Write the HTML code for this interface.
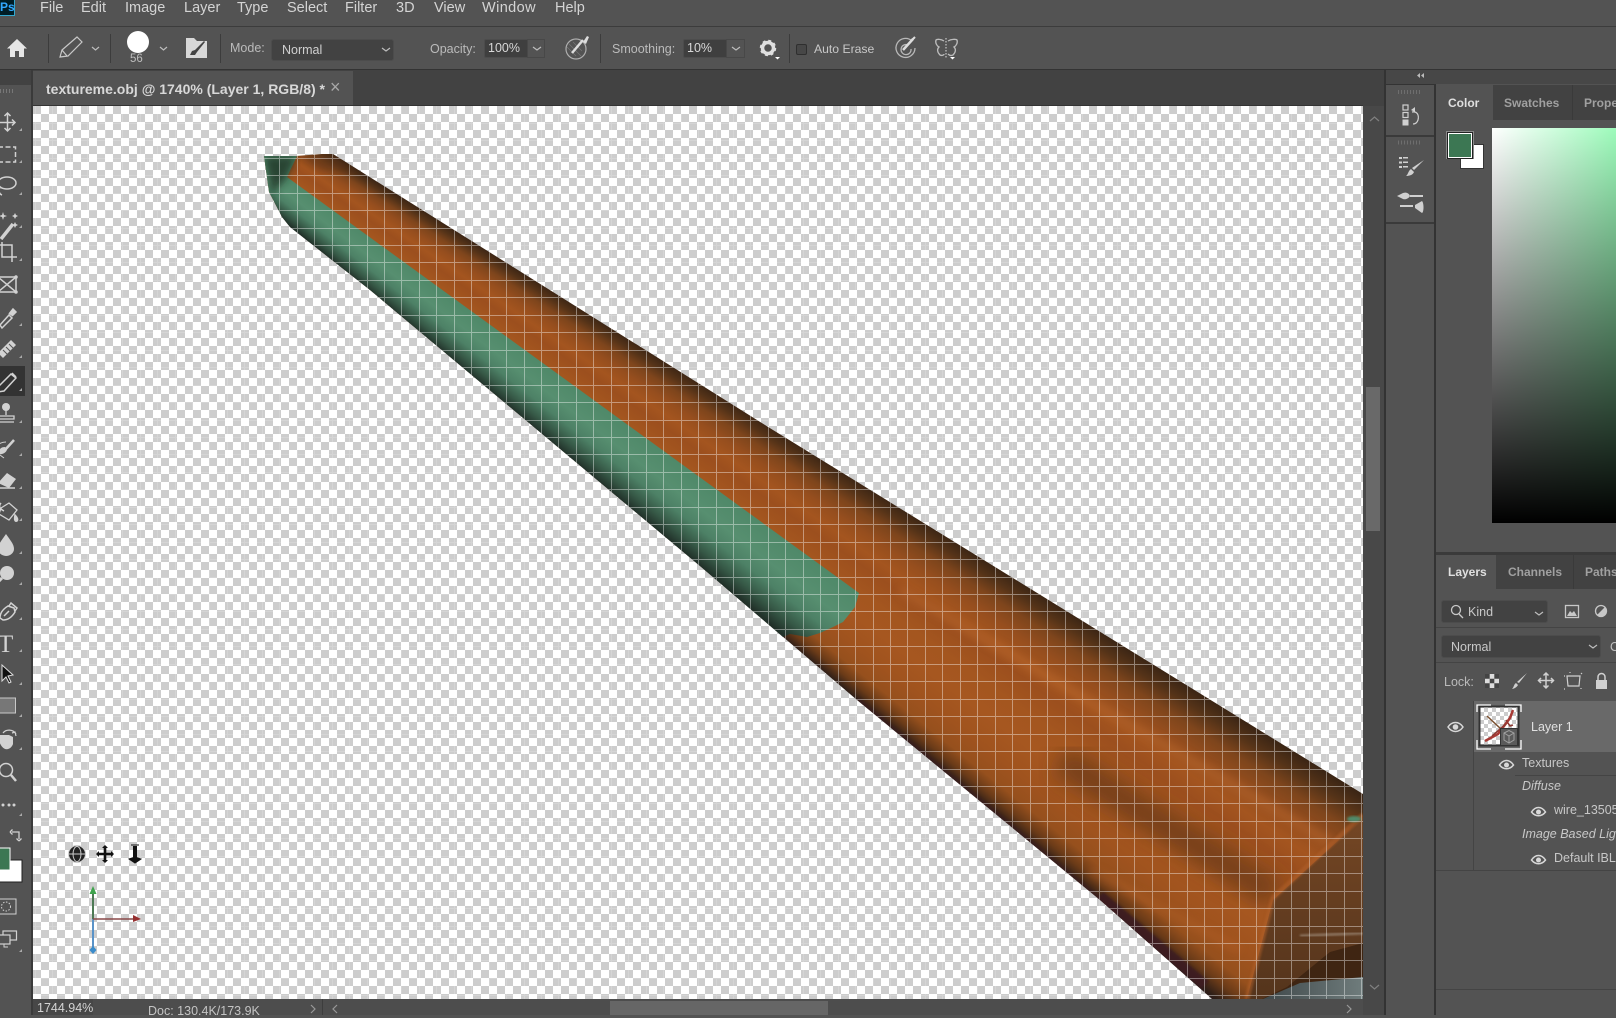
<!DOCTYPE html>
<html>
<head>
<meta charset="utf-8">
<style>
html,body{margin:0;padding:0;background:#535353;width:1616px;height:1015px;overflow:hidden;font-family:"Liberation Sans",sans-serif}
.a{position:absolute}
.t{position:absolute;white-space:nowrap;line-height:1;color:#c6c6c6;font-size:13px}
.m{font-size:14.5px;color:#d4d4d4;top:1px}
.tab{color:#a0a0a0;font-weight:bold;font-size:12px}
svg{position:absolute;left:0;top:0;overflow:hidden}
</style>
</head>
<body>
<!-- canvas -->
<div class="a" style="left:33px;top:106px;width:1330px;height:893px;background-color:#fff;background-image:repeating-conic-gradient(#cdcdcd 0 25%,#fff 0 50%);background-size:16px 16px;background-position:8px 0"></div>

<!-- mesh -->
<div class="a" style="left:0;top:0;width:1616px;height:1015px;clip-path:polygon(264px 156px,296px 156px,322px 154px,333px 154px,773px 430px,1363px 794px,1363px 999px,1212px 999px,1100px 900px,857px 700px,700px 566px,370px 290px,290px 227px,282px 217px,269px 192px);background:conic-gradient(at -187px -169px,#372314 121.8deg,#553318 122.4deg,#7e451c 123deg,#964e1e 123.7deg,#a4551f 124.4deg,#9c4f1e 125deg,#a4561f 126deg,#a65720 127deg,#a0531e 128deg,#96501d 128.8deg,#6b3b18 129.3deg,#2f1f18 129.75deg,#2b1a1f 130deg)"></div>
<!-- green -->
<div class="a" style="left:0;top:0;width:1616px;height:1015px;clip-path:polygon(264px 156px,297px 156px,287px 177px,859px 593px,855px 607px,843px 622px,833px 627px,820px 633px,807px 637px,790px 634px,783px 637px,700px 566px,370px 290px,290px 227px,282px 217px,269px 192px);background:conic-gradient(at -187px -169px,#4e8868 126deg,#578f70 127.4deg,#4d8166 128.2deg,#365846 129deg,#22322a 129.6deg,#1d2721 130deg)"></div>

<svg width="1616" height="1015" style="clip-path:polygon(264px 156px,296px 156px,322px 154px,333px 154px,773px 430px,1363px 794px,1363px 999px,1212px 999px,1100px 900px,857px 700px,700px 566px,370px 290px,290px 227px,282px 217px,269px 192px)">
<defs>
<filter id="b1"><feGaussianBlur stdDeviation="1"/></filter>
<filter id="b3"><feGaussianBlur stdDeviation="4"/></filter>
<filter id="b10"><feGaussianBlur stdDeviation="10"/></filter>
<linearGradient id="cap" x1="0" y1="0" x2="0" y2="1"><stop offset="0" stop-color="#744624"/><stop offset="1" stop-color="#54341c"/></linearGradient>
<linearGradient id="gry" x1="0" y1="0" x2="1" y2="0"><stop offset="0" stop-color="#3f484a"/><stop offset="1" stop-color="#6f7c7c"/></linearGradient>
</defs>
<polygon points="264,156 297,156 287,177 272,195" fill="#1a2e24" opacity=".75" filter="url(#b3)"/>
<polygon points="297,154 333,154 360,172 320,170" fill="#5a3318" opacity=".5" filter="url(#b3)"/>
<line x1="1060" y1="760" x2="1275" y2="895" stroke="#5a3113" stroke-width="32" opacity=".6" filter="url(#b10)"/>
<line x1="900" y1="590" x2="1330" y2="842" stroke="#c67438" stroke-width="10" opacity=".3" filter="url(#b3)"/>
<line x1="1090" y1="870" x2="1240" y2="950" stroke="#b8632a" stroke-width="10" opacity=".35" filter="url(#b3)"/>
<line x1="857" y1="700" x2="1100" y2="900" stroke="#3c1a24" stroke-width="6" opacity=".5" filter="url(#b1)"/>
<line x1="1100" y1="896" x2="1205" y2="985" stroke="#3c1a24" stroke-width="10" opacity=".9" filter="url(#b1)"/>
<polygon points="1363,818 1273,900 1247,999 1363,999" fill="url(#cap)"/>
<polyline points="1363,815 1273,898 1247,999" fill="none" stroke="#b0602a" stroke-width="5" opacity=".55" filter="url(#b1)"/>
<polygon points="1262,999 1287,987 1330,952 1363,943 1363,999" fill="#3f2512"/>
<polygon points="1263,999 1300,983 1363,977 1363,999" fill="url(#gry)"/>
<line x1="1300" y1="936" x2="1363" y2="933" stroke="#a89888" stroke-width="3" opacity=".6" filter="url(#b1)"/>
<ellipse cx="1354" cy="819" rx="7" ry="3" fill="#4f8a6a" filter="url(#b1)"/>
</svg>

<!-- pixel grid -->
<svg width="1616" height="1015">
<path id="gr" fill="none" stroke="#fff" stroke-opacity=".16" stroke-width="1" shape-rendering="crispEdges" d="M35.5 106V999M52.5 106V999M70.5 106V999M87.5 106V999M105.5 106V999M122.5 106V999M140.5 106V999M157.5 106V999M175.5 106V999M192.5 106V999M209.5 106V999M227.5 106V999M244.5 106V999M262.5 106V999M279.5 106V999M297.5 106V999M314.5 106V999M332.5 106V999M349.5 106V999M367.5 106V999M384.5 106V999M401.5 106V999M419.5 106V999M436.5 106V999M454.5 106V999M471.5 106V999M489.5 106V999M506.5 106V999M524.5 106V999M541.5 106V999M558.5 106V999M576.5 106V999M593.5 106V999M611.5 106V999M628.5 106V999M646.5 106V999M663.5 106V999M681.5 106V999M698.5 106V999M716.5 106V999M733.5 106V999M750.5 106V999M768.5 106V999M785.5 106V999M803.5 106V999M820.5 106V999M838.5 106V999M855.5 106V999M873.5 106V999M890.5 106V999M907.5 106V999M925.5 106V999M942.5 106V999M960.5 106V999M977.5 106V999M995.5 106V999M1012.5 106V999M1030.5 106V999M1047.5 106V999M1065.5 106V999M1082.5 106V999M1099.5 106V999M1117.5 106V999M1134.5 106V999M1152.5 106V999M1169.5 106V999M1187.5 106V999M1204.5 106V999M1222.5 106V999M1239.5 106V999M1256.5 106V999M1274.5 106V999M1291.5 106V999M1309.5 106V999M1326.5 106V999M1344.5 106V999M1361.5 106V999
M33 123.5H1363M33 140.5H1363M33 158.5H1363M33 175.5H1363M33 193.5H1363M33 210.5H1363M33 228.5H1363M33 245.5H1363M33 262.5H1363M33 280.5H1363M33 297.5H1363M33 315.5H1363M33 332.5H1363M33 350.5H1363M33 367.5H1363M33 385.5H1363M33 402.5H1363M33 420.5H1363M33 437.5H1363M33 454.5H1363M33 472.5H1363M33 489.5H1363M33 507.5H1363M33 524.5H1363M33 542.5H1363M33 559.5H1363M33 577.5H1363M33 594.5H1363M33 611.5H1363M33 629.5H1363M33 646.5H1363M33 664.5H1363M33 681.5H1363M33 699.5H1363M33 716.5H1363M33 734.5H1363M33 751.5H1363M33 769.5H1363M33 786.5H1363M33 803.5H1363M33 821.5H1363M33 838.5H1363M33 856.5H1363M33 873.5H1363M33 891.5H1363M33 908.5H1363M33 926.5H1363M33 943.5H1363M33 960.5H1363M33 978.5H1363M33 995.5H1363"/>
</svg>
<svg width="1616" height="1015" style="clip-path:polygon(264px 156px,296px 156px,322px 154px,333px 154px,773px 430px,1363px 794px,1363px 999px,1212px 999px,1100px 900px,857px 700px,700px 566px,370px 290px,290px 227px,282px 217px,269px 192px)">
<use href="#gr"/>
<use href="#gr"/>
</svg>

<!-- chrome panels -->
<div class="a" style="left:0;top:0;width:1616px;height:26px;background:#535353"></div>
<div class="a" style="left:0;top:26px;width:1616px;height:1px;background:#3c3c3c"></div>
<div class="a" style="left:0;top:27px;width:1616px;height:42px;background:#535353"></div>
<div class="a" style="left:0;top:69px;width:1616px;height:1px;background:#333"></div>
<div class="a" style="left:33px;top:70px;width:1352px;height:36px;background:#424242"></div>
<div class="a" style="left:33px;top:71px;width:320px;height:34px;background:#535353"></div>
<div class="a" style="left:33px;top:105px;width:1330px;height:1px;background:#333"></div>
<!-- left toolbar -->
<div class="a" style="left:0;top:70px;width:31px;height:15px;background:#424242"></div>
<div class="a" style="left:0;top:85px;width:31px;height:930px;background:#535353"></div>
<div class="a" style="left:31px;top:70px;width:2px;height:945px;background:#3a3a3a"></div>
<div class="a" style="left:0;top:366px;width:25px;height:30px;background:#333"></div>
<!-- right scrollbar -->
<div class="a" style="left:1363px;top:106px;width:21px;height:909px;background:#484848"></div>
<div class="a" style="left:1366px;top:387px;width:14px;height:144px;background:#696969"></div>
<div class="a" style="left:1384px;top:70px;width:2px;height:945px;background:#333"></div>
<!-- dock -->
<div class="a" style="left:1386px;top:70px;width:230px;height:14px;background:#474747"></div>
<div class="a" style="left:1386px;top:84px;width:48px;height:931px;background:#535353"></div>
<div class="a" style="left:1386px;top:84px;width:48px;height:1px;background:#333"></div>
<div class="a" style="left:1386px;top:135px;width:48px;height:2px;background:#3a3a3a"></div>
<div class="a" style="left:1386px;top:222px;width:48px;height:2px;background:#3a3a3a"></div>
<div class="a" style="left:1434px;top:84px;width:2px;height:931px;background:#333"></div>
<!-- color panel -->
<div class="a" style="left:1436px;top:85px;width:180px;height:35px;background:#424242"></div>
<div class="a" style="left:1436px;top:85px;width:57px;height:35px;background:#535353"></div>
<div class="a" style="left:1572px;top:85px;width:1px;height:35px;background:#3a3a3a"></div>
<div class="a" style="left:1436px;top:120px;width:180px;height:432px;background:#535353"></div>
<div class="a" style="left:1492px;top:128px;width:124px;height:395px;background:linear-gradient(to bottom,rgba(0,0,0,0),#000),linear-gradient(to right,#fff,#9dfbbb)"></div>
<div class="a" style="left:1461px;top:145px;width:22px;height:23px;background:#fff;outline:1px solid #333"></div>
<div class="a" style="left:1446px;top:131px;width:28px;height:28px;background:#8a8a8a"></div>
<div class="a" style="left:1448px;top:133px;width:22px;height:23px;background:#3c7753;border:1px solid #fff;outline:1px solid #222"></div>
<!-- layers panel -->
<div class="a" style="left:1436px;top:552px;width:180px;height:3px;background:#3a3a3a"></div>
<div class="a" style="left:1436px;top:555px;width:180px;height:34px;background:#424242"></div>
<div class="a" style="left:1436px;top:555px;width:60px;height:34px;background:#535353"></div>
<div class="a" style="left:1573px;top:555px;width:1px;height:34px;background:#3a3a3a"></div>
<div class="a" style="left:1436px;top:589px;width:180px;height:426px;background:#535353"></div>
<div class="a" style="left:1441px;top:600px;width:107px;height:23px;background:#424242;border-radius:3px;box-sizing:border-box;border:1px solid #4c4c4c"></div>
<div class="a" style="left:1436px;top:627px;width:180px;height:1px;background:#444"></div>
<div class="a" style="left:1441px;top:635px;width:160px;height:23px;background:#424242;border-radius:3px;box-sizing:border-box;border:1px solid #4c4c4c"></div>
<div class="a" style="left:1436px;top:662px;width:180px;height:1px;background:#444"></div>
<div class="a" style="left:1474px;top:701px;width:142px;height:51px;background:#696969"></div>
<div class="a" style="left:1473px;top:701px;width:1px;height:169px;background:#444"></div>
<div class="a" style="left:1515px;top:775px;width:101px;height:1px;background:#444"></div>
<div class="a" style="left:1436px;top:870px;width:180px;height:1px;background:#444"></div>
<div class="a" style="left:1436px;top:989px;width:180px;height:1px;background:#444"></div>
<!-- status -->
<div class="a" style="left:33px;top:999px;width:1330px;height:16px;background:#4d4d4d"></div>
<div class="a" style="left:33px;top:999px;width:60px;height:16px;background:#474747"></div>
<div class="a" style="left:322px;top:999px;width:1px;height:16px;background:#3d3d3d"></div>
<div class="a" style="left:610px;top:1001px;width:218px;height:14px;background:#666"></div>
<!-- options controls -->
<div class="a" style="left:271px;top:39px;width:123px;height:22px;background:#424242;border-radius:3px;box-sizing:border-box;border:1px solid #4c4c4c"></div>
<div class="a" style="left:484px;top:39px;width:61px;height:19px;background:#3f3f3f;border-radius:2px;box-sizing:border-box;border:1px solid #4c4c4c"></div>
<div class="a" style="left:527px;top:39px;width:18px;height:19px;background:#535353;box-sizing:border-box;border:1px solid #484848"></div>
<div class="a" style="left:683px;top:39px;width:62px;height:19px;background:#3f3f3f;border-radius:2px;box-sizing:border-box;border:1px solid #4c4c4c"></div>
<div class="a" style="left:726px;top:39px;width:19px;height:19px;background:#535353;box-sizing:border-box;border:1px solid #484848"></div>
<div class="a" style="left:796px;top:44px;width:11px;height:11px;background:#474747;box-sizing:border-box;border:1px solid #2f2f2f;border-radius:2px"></div>
<div class="a" style="left:48px;top:34px;width:1px;height:29px;background:#3c3c3c"></div>
<div class="a" style="left:110px;top:34px;width:1px;height:29px;background:#3c3c3c"></div>
<div class="a" style="left:220px;top:34px;width:1px;height:29px;background:#3c3c3c"></div>
<div class="a" style="left:600px;top:34px;width:1px;height:29px;background:#3c3c3c"></div>
<div class="a" style="left:789px;top:34px;width:1px;height:29px;background:#3c3c3c"></div>
<!-- PS logo -->
<div class="a" style="left:-6px;top:-4px;width:21px;height:20px;background:#001d26;box-sizing:border-box;border:1px solid #31a8d0"></div>
<span class="t" style="left:0;top:1px;font-size:12px;font-weight:bold;color:#31a8ff">Ps</span>

<!-- menu -->
<span class="t m" style="left:40px">File</span>
<span class="t m" style="left:81px">Edit</span>
<span class="t m" style="left:125px">Image</span>
<span class="t m" style="left:184px">Layer</span>
<span class="t m" style="left:237px">Type</span>
<span class="t m" style="left:287px">Select</span>
<span class="t m" style="left:345px">Filter</span>
<span class="t m" style="left:396px">3D</span>
<span class="t m" style="left:434px">View</span>
<span class="t m" style="left:482px;letter-spacing:.4px">Window</span>
<span class="t m" style="left:555px">Help</span>
<!-- options -->
<span class="t" style="left:130px;top:54px;font-size:11.5px;color:#bdbdbd">56</span>
<span class="t" style="left:230px;top:42px;font-size:12.5px;color:#bbb">Mode:</span>
<span class="t" style="left:282px;top:44px;font-size:12.5px;color:#d0d0d0">Normal</span>
<span class="t" style="left:430px;top:43px;font-size:12.5px;color:#bbb">Opacity:</span>
<span class="t" style="left:488px;top:42px;font-size:12.5px;color:#d8d8d8">100%</span>
<span class="t" style="left:612px;top:43px;font-size:12.5px;color:#bbb">Smoothing:</span>
<span class="t" style="left:687px;top:42px;font-size:12.5px;color:#d8d8d8">10%</span>
<span class="t" style="left:814px;top:43px;font-size:12.2px;color:#c8c8c8">Auto Erase</span>
<!-- doc tab -->
<span class="t" style="left:46px;top:82px;font-size:14px;font-weight:bold;color:#d8d8d8">textureme.obj @ 1740% (Layer 1, RGB/8) *</span>
<span class="t" style="left:330px;top:78px;font-size:18px;color:#a8a8a8">×</span>
<!-- panel tabs -->
<span class="t tab" style="left:1448px;top:97px;color:#e0e0e0">Color</span>
<span class="t tab" style="left:1504px;top:97px">Swatches</span>
<span class="t tab" style="left:1584px;top:97px">Prope</span>
<span class="t tab" style="left:1448px;top:566px;color:#e0e0e0">Layers</span>
<span class="t tab" style="left:1508px;top:566px">Channels</span>
<span class="t tab" style="left:1585px;top:566px">Paths</span>
<span class="t" style="left:1468px;top:606px;font-size:12.5px;color:#c8c8c8">Kind</span>
<span class="t" style="left:1451px;top:641px;font-size:12.5px;color:#c8c8c8">Normal</span>
<span class="t" style="left:1610px;top:641px;font-size:12.5px;color:#c0c0c0">O</span>
<span class="t" style="left:1444px;top:676px;font-size:12.5px;color:#bbb">Lock:</span>
<span class="t" style="left:1531px;top:721px;font-size:12.5px;color:#e0e0e0">Layer 1</span>
<span class="t" style="left:1522px;top:757px;font-size:12.5px;color:#c8c8c8">Textures</span>
<span class="t" style="left:1522px;top:780px;font-size:12.5px;font-style:italic;color:#c8c8c8">Diffuse</span>
<span class="t" style="left:1554px;top:804px;font-size:12.5px;color:#c8c8c8">wire_13505</span>
<span class="t" style="left:1522px;top:828px;font-size:12.5px;font-style:italic;color:#c8c8c8">Image Based Lig</span>
<span class="t" style="left:1554px;top:852px;font-size:12.5px;color:#c8c8c8">Default IBL</span>
<!-- status -->
<span class="t" style="left:37px;top:1002px;font-size:12.5px;color:#d4d4d4">1744.94%</span>
<span class="t" style="left:148px;top:1005px;font-size:12.5px;color:#c4c4c4">Doc: 130.4K/173.9K</span>

<!-- icons -->
<svg width="1616" height="1015">
<g fill="none" stroke="#bdbdbd" stroke-width="1.2">
<!-- chevrons -->
<path d="M92 47l3.5 3 3.5-3M160 47l3.5 3 3.5-3M382 48l4 3 4-3M533 47l4 3 4-3M732 47l4 3 4-3M1535 612l4 3 4-3M1589 645l4 3 4-3"/>
<path d="M1370 121l4.500-4 4.500 4M1370 985l4.500 4 4.500-4" stroke="#808080"/>
<path d="M311 1005l4 4-4 4M337 1005l-4 4 4 4M1347 1005l4 4-4 4" stroke="#999"/>
</g>
<!-- home -->
<path d="M17 39L7 48.500h3V57h5v-6h4v6h5v-8.500h3z" fill="#e6e6e6"/>
<!-- pencil -->
<path d="M60 57l2-7 15-13 5 5-14 14z M62 50l5 6" fill="none" stroke="#c8c8c8" stroke-width="1.2"/>
<circle cx="138" cy="42" r="11" fill="#fff"/>
<!-- brush folder -->
<path d="M186 38h8l3 3h10v17h-21z" fill="#d8d8d8"/>
<path d="M190 55l2-4 3-1 9-9 1 1-8 10-2 3z" fill="#444"/>
<!-- airbrush -->
<g fill="none" stroke="#aeaeae" stroke-width="1.2">
<circle cx="576" cy="49" r="10"/>
<path d="M567 47l9 9M569 44l12 12M573 42l9 9" stroke-width=".7" stroke="#777"/>
<path d="M572 53l11-13" stroke="#ddd" stroke-width="2.500"/>
</g>
<path d="M583 42l4-6 2 1-3 7z" fill="#ddd"/>
<!-- gear -->
<circle cx="768" cy="48" r="5.500" fill="none" stroke="#e0e0e0" stroke-width="3.500"/>
<circle cx="768" cy="48" r="7" fill="none" stroke="#e0e0e0" stroke-width="2.500" stroke-dasharray="2.800 2.700"/>
<path d="M775 57h5l-2.500 2.500z" fill="#fff"/>
<!-- target -->
<g fill="none" stroke="#b8b8b8" stroke-width="1.300">
<path d="M912 41a9.500 9.500 0 1 0 3 7"/><path d="M908 45a5 5 0 1 0 3 4"/>
<path d="M903 50l10-11" stroke="#ddd" stroke-width="2.500"/><path d="M912 40l3-3" stroke="#ddd" stroke-width="2"/>
</g>
<!-- butterfly -->
<g fill="none" stroke="#bdbdbd" stroke-width="1.300">
<path d="M944 41c-3-2-7-2-8-1-1 3 1 6 3 7-2 2-2 5 1 8 2 1 4 0 4-1"/>
<path d="M948 41c3-2 8-2 9-1 1 3-1 6-3 7 2 2 2 5-1 8-2 1-4 0-5-1"/>
<path d="M946 38v20" stroke-dasharray="1.500 1.500"/>
</g>
<path d="M950 57h5l-2.500 2.500z" fill="#fff"/>

<!-- grips -->
<path d="M0 91h15" stroke="#777" stroke-width="4" stroke-dasharray="1 2"/>
<path d="M1398 92h22M1398 142.500h22" stroke="#6e6e6e" stroke-width="4" stroke-dasharray="1 2"/>
<path d="M1424 73v5l-3-2.500zM1420 73v5l-3-2.500z" fill="#bbb"/>
<!-- dock icons -->
<g fill="none" stroke="#d0d0d0" stroke-width="1.200">
<rect x="1403" y="105" width="5" height="5"/><rect x="1403" y="112.500" width="5" height="5"/>
<path d="M1412 112c6-1 7 4 6 8-1 3-3 4-5 4"/>
</g>
<path d="M1402.500 119.500h6v6h-6zM1411 110l4-3v5z" fill="#d0d0d0"/>
<g fill="#d0d0d0">
<path d="M1399 157h3v2h-3zM1399 161.500h3v2h-3zM1399 166h3v2h-3zM1403 157h5v1.500h-5zM1403 161.500h5v1.500h-5zM1403 166h5v1.500h-5z"/>
<path d="M1424 160l-10 10-2-2zM1411 169l3 3c-1 3-5 4-8 4 2-1 2-5 5-7z"/>
<path d="M1397 196l6-3c3-1 6 0 7 3-1 2-4 4-7 3zM1410 195h13v2h-13z"/>
<path d="M1400 205h13v2h-13zM1422 201l-7 4v3l7 5c2-1 2-10 0-12z"/>
</g>

<!-- left tools -->
<g fill="none" stroke="#d2d2d2" stroke-width="1.500">
<path d="M7.500 114v17M-1 122.500h16" />
<path d="M4.500 116l3-3 3 3M4.500 128l3 3 3-3M12 119.500l3 3-3 3"/>
<rect x="-2" y="147" width="17.500" height="15" stroke-dasharray="5 2.500"/>
<ellipse cx="7" cy="183" rx="9" ry="6"/><path d="M0 188c-2 2-1 6 2 7"/>
<path d="M1 239l12-15" stroke-width="3.500"/>
<path d="M3 212l1 3 3 1-3 1-1 3-1-3-3-1 3-1zM15 213l1 2 2 1-2 1-1 2-1-2-2-1 2-1zM15 222l1 2 2 1-2 1-1 2-1-2-2-1 2-1z" fill="#d2d2d2" stroke="none"/>
<path d="M-2 245h14v17M2 242v15h15"/>
<rect x="-2" y="277" width="18" height="15"/><path d="M-2 277l18 15M16 277l-18 15"/>
<circle cx="16" cy="277" r="1" fill="#d2d2d2"/><circle cx="16" cy="292" r="1" fill="#d2d2d2"/>
<path d="M0 325l9-10 3 3-10 10z"/><path d="M9 314l4-5 3 3-4 4" fill="#d2d2d2"/>
<path d="M-2 356l13-13 5 5-13 13z" fill="#d2d2d2" stroke="none" transform="translate(0,-3)"/>
<path d="M3 350l5 5M6 347l5 5M9 344l5 5" stroke="#555" stroke-width="1"/>
<path d="M-1 386l12-12 5 4-12 13-6 1z"/><path d="M12 373l4 4" />
<circle cx="6" cy="407" r="4" fill="#d2d2d2" stroke="none"/>
<path d="M6 410v5M-2 416h16v3H-2zM-2 422h16" stroke-width="1.300"/>
<path d="M5 450l9-10" stroke-width="2.500"/><path d="M-2 452c2-4 4-5 7-5l2 2c0 3-4 6-9 5z" fill="#d2d2d2" stroke="none"/>
<path d="M-2 445c3-3 6-3 8-3M0 455l4 3" stroke-width="1"/>
<path d="M-2 483l9-10 9 6-7 9z" fill="#d2d2d2" stroke="none"/>
<path d="M-2 488H15"/>
<path d="M1 508l8-5 8 7-8 10-10-6z" stroke-width="1.300"/><path d="M1 503c-3 3-1 6 3 8"/>
<path d="M15 515c3 3 3 5 2 6-2 1-3-1-2-6z" fill="#d2d2d2"/>
<path d="M6 534c4 6 8 10 8 15 0 4-4 7-8 7s-8-3-8-7c0-5 4-9 8-15z" fill="#d2d2d2" stroke="none"/>
<circle cx="7" cy="573" r="7" fill="#d2d2d2" stroke="none"/><path d="M2 578l-5 5" stroke-width="3"/>
<path d="M0 618c0-5 3-9 8-12l6 2 1 4c-3 5-7 8-12 8z M9 611l-5 5"/><path d="M9 606l2-3 6 5-2 3" />
<text x="-2" y="652" font-family="Liberation Serif" font-size="25" fill="#d2d2d2" stroke="none">T</text>
<path d="M2 665v16l4-4 3 6 2-1-3-6 5-1z" fill="#111" stroke="#ddd" stroke-width="1"/>
<rect x="-2" y="698" width="17.500" height="15" fill="#777" stroke="#c8c8c8" stroke-width="1"/>
<path d="M5 749c-4-2-6-7-6-10v-4h10l4 2v7c-1 3-4 6-8 5z" fill="#d2d2d2" stroke="none"/>
<path d="M3 733c3-4 10-4 13 1M16 736l-1-4-3 1" stroke-width="1.200"/>
<circle cx="6" cy="770" r="6.500"/><path d="M11 775l5 6" stroke-width="2.500"/>
<path d="M3 805h.01M9 805h.01M14 805h.01" stroke-width="3" stroke-linecap="round"/>
<path d="M12 832h7v7M10 832l2.500-2.500M10 832l2.500 2.500M19 841l-2.500-2.500M19 841l2.500-2.500" stroke-width="1.300"/>
<rect x="-2" y="899" width="18" height="15" fill="none" stroke-width="1"/><circle cx="6" cy="906.500" r="4.500" stroke-dasharray="1.500 1.500" stroke-width="1"/>
<rect x="3" y="931" width="13.500" height="9" stroke-width="1.200"/><rect x="-3" y="935" width="13" height="9" fill="#535353" stroke-width="1.200"/>
<path d="M4 944v3h4" stroke-width="1"/>
</g>
<!-- fg/bg tool -->
<rect x="-3" y="860" width="25" height="22" fill="#fff" stroke="#222"/>
<rect x="-3" y="848" width="13" height="22" fill="#3c7753" stroke="#fff"/>
<!-- tool corners -->
<path fill="#aaa" d="M22 128v3h-3zM22 160v3h-3zM22 192v3h-3zM22 225v3h-3zM22 258v3h-3zM22 323v3h-3zM22 355v3h-3zM22 388v3h-3zM22 420v3h-3zM22 453v3h-3zM22 486v3h-3zM22 518v3h-3zM22 551v3h-3zM22 582v3h-3zM22 617v3h-3zM22 649v3h-3zM22 682v3h-3zM22 714v3h-3zM22 747v3h-3zM22 813v3h-3zM22 949v3h-3z"/>

<!-- 3D widgets -->
<circle cx="77" cy="854" r="8.500" fill="#222" stroke="#ccc"/>
<ellipse cx="77" cy="854" rx="4" ry="7.500" fill="none" stroke="#ccc"/><path d="M69 854h16" stroke="#ccc"/>
<path d="M105 846v16M97 854h16" stroke="#111" stroke-width="2.600"/>
<path d="M102 848l3-3 3 3zM102 860l3 3 3-3zM99 851l-3 3 3 3zM111 851l3 3-3 3z" fill="#111"/>
<path d="M135 846v12" stroke="#111" stroke-width="4"/><path d="M131 845h8M129 859l6 4 6-4-6-2z" stroke="#111" fill="#111"/>
<path d="M93 893v26" stroke="#4d7a55" stroke-width="2"/>
<path d="M93 919v28" stroke="#5a93c8" stroke-width="2"/>
<path d="M93 919h42" stroke="#8a4a4a" stroke-width="1.500"/>
<path d="M93 886l-3.500 8h7z" fill="#3fa34d"/>
<path d="M141 919l-8-4v7z" fill="#963030"/>
<path d="M93 954l-3.500-4 3.500-4 3.500 4z" fill="#3b8ccb"/>

<!-- layer panel icons -->
<g fill="none" stroke="#c8c8c8" stroke-width="1.300">
<circle cx="1456" cy="610" r="4.500"/><path d="M1459 614l4 4"/>
<rect x="1565.500" y="605.500" width="13" height="12"/>
<circle cx="1601" cy="611" r="5.500"/>
</g>
<path d="M1567 616l3-5 2 2 2-2 3 5z" fill="#c8c8c8"/>
<path d="M1597 615l8-8a5.500 5.500 0 0 1-8 8z" fill="#c8c8c8"/>
<rect x="1485" y="674" width="14" height="14" fill="#ddd"/>
<path d="M1485 674h4.700v4.700h-4.700zM1494.300 674h4.700v4.700h-4.700zM1489.700 678.700h4.600v4.600h-4.600zM1485 683.300h4.700v4.700h-4.700zM1494.300 683.300h4.700v4.700h-4.700z" fill="#444"/>
<path d="M1527 673l-8 10-2-1zM1516 683l2 2c-1 2-4 4-6 4 2-2 2-5 4-6z" fill="#d0d0d0"/>
<g fill="none" stroke="#d0d0d0" stroke-width="1.500">
<path d="M1546 673v15M1538 680.500h16M1543.500 675.500l2.500-2.500 2.500 2.500M1543.500 685.500l2.500 2.500 2.500-2.500M1541 678l-2.500 2.500 2.500 2.500M1551 678l2.500 2.500-2.500 2.500"/>
<path d="M1567 676h13l-1 10h-11zM1565 676h-1M1570 673v-1M1581 674l1-1M1564 689h1M1581 688v1" stroke-width="1.200"/>
</g>
<path d="M1596 680h11v9h-11z" fill="#d0d0d0"/><path d="M1598 680v-3a3.500 3.500 0 0 1 7 0v3" fill="none" stroke="#d0d0d0" stroke-width="1.500"/>
<!-- eyes -->
<g fill="none" stroke="#d8d8d8" stroke-width="1.500">
<path d="M1448 727c4-6 11-6 15 0-4 6-11 6-15 0z"/>
<path d="M1499.500 765c4-6 10-6 14 0-4 5-10 5-14 0z"/>
<path d="M1531.500 812c4-6 10-6 14 0-4 5-10 5-14 0z"/>
<path d="M1531.500 860c4-6 10-6 14 0-4 5-10 5-14 0z"/>
</g>
<circle cx="1455.500" cy="727" r="2.800" fill="#d8d8d8"/><circle cx="1506.500" cy="765" r="2.500" fill="#d8d8d8"/><circle cx="1538.500" cy="812" r="2.500" fill="#d8d8d8"/><circle cx="1538.500" cy="860" r="2.500" fill="#d8d8d8"/>
<!-- thumbnail -->
<defs><pattern id="ck" width="8" height="8" patternUnits="userSpaceOnUse"><rect width="8" height="8" fill="#fff"/><rect width="4" height="4" fill="#ccc"/><rect x="4" y="4" width="4" height="4" fill="#ccc"/></pattern></defs>
<rect x="1479.500" y="706.500" width="39" height="39" fill="url(#ck)" stroke="#333" stroke-width="2"/>
<path d="M1485 741l13-7 12-16 3-8" fill="none" stroke="#a83a35" stroke-width="2.500"/>
<path d="M1487 716l14 13 6 3" fill="none" stroke="#7a5030" stroke-width="1.500"/>
<path d="M1506 720l4 6 3-1M1492 736l14-12" fill="none" stroke="#8f3a33" stroke-width="1.500"/>
<rect x="1500.500" y="728.500" width="17" height="17" fill="#5a5a5a" stroke="#333"/>
<path d="M1504 733l5-2.500 5 2.500v7l-5 3-5-3zM1504 733l5 3 5-3M1509 736v7" fill="none" stroke="#a0a0a0"/>
<path d="M1477 712v-7h14M1505 705h16v7M1477 740v9h14M1505 749h16v-9" fill="none" stroke="#fff" stroke-width="1.300"/>
</svg>
</body>
</html>
